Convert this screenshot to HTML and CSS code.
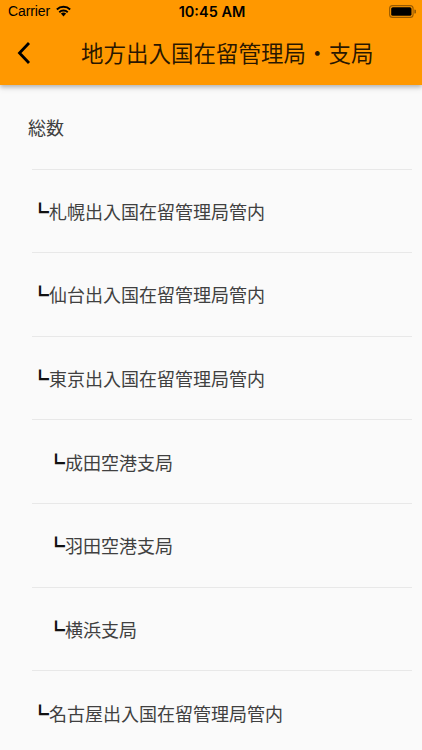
FILE: index.html
```html
<!DOCTYPE html>
<html lang="ja">
<head>
<meta charset="utf-8">
<link rel="stylesheet" href="styles.css">
</head>
<body>
<header class="appbar">
  <div class="status">
    <div class="status-left">
      <span class="carrier">Carrier</span>
      <svg class="wifi" width="17" height="12" viewBox="0 0 17 12"><path d="M8.5 11.6 L5.9 8.6 A3.8 3.8 0 0 1 11.1 8.6 Z" fill="#000"/><path d="M3.6 6.4 A7 7 0 0 1 13.4 6.4 L12.1 7.9 A5.1 5.1 0 0 0 4.9 7.9 Z" fill="#000"/><path d="M1.2 3.8 A10.4 10.4 0 0 1 15.8 3.8 L14.5 5.3 A8.5 8.5 0 0 0 2.5 5.3 Z" fill="#000"/></svg>
    </div>
    <span class="time">10:45 AM</span>
    <div class="status-right">
      <svg class="battery" width="27" height="13" viewBox="0 0 27 13"><rect x="0.6" y="0.6" width="23.5" height="11.8" rx="3" fill="none" stroke="#000" stroke-opacity="0.4" stroke-width="1.1"/><rect x="2.2" y="2.2" width="20.3" height="8.6" rx="1.6" fill="#000"/><path d="M25.3 4.4 a2 2 0 0 1 0 4.2 z" fill="#000" fill-opacity="0.4"/></svg>
    </div>
  </div>
  <div class="navbar">
    <svg class="back" width="20" height="24" viewBox="0 0 20 24"><path d="M14 2 L4.5 12 L14 22" fill="none" stroke="#000" stroke-width="2.8" stroke-linecap="butt" stroke-linejoin="miter"/></svg>
    <h1 class="title">地方出入国在留管理局・支局</h1>
  </div>
</header>
<main class="list">
  <div class="row lv0">総数</div>
  <div class="divider"></div>
  <div class="row lv1"><span class="mark">┗</span>札幌出入国在留管理局管内</div>
  <div class="divider"></div>
  <div class="row lv1"><span class="mark">┗</span>仙台出入国在留管理局管内</div>
  <div class="divider"></div>
  <div class="row lv1"><span class="mark">┗</span>東京出入国在留管理局管内</div>
  <div class="divider"></div>
  <div class="row lv2"><span class="mark">┗</span>成田空港支局</div>
  <div class="divider"></div>
  <div class="row lv2"><span class="mark">┗</span>羽田空港支局</div>
  <div class="divider"></div>
  <div class="row lv2"><span class="mark">┗</span>横浜支局</div>
  <div class="divider"></div>
  <div class="row lv1"><span class="mark">┗</span>名古屋出入国在留管理局管内</div>
  <div class="divider"></div>
</main>
</body>
</html>
```

FILE: styles.css
```css
html, body {
  margin: 0;
  padding: 0;
}
body {
  width: 422px;
  height: 750px;
  overflow: hidden;
  background: #fafafa;
  font-family: "Noto Sans CJK JP", "Noto Sans", sans-serif;
}
.appbar {
  background: #ff9800;
  box-shadow: 0 2px 4px rgba(0,0,0,0.22), 0 4px 6px rgba(0,0,0,0.08);
  position: relative;
  z-index: 2;
}
.status {
  height: 22px;
  display: grid;
  grid-template-columns: 1fr auto 1fr;
  align-items: center;
  padding: 0 8px;
}
.status-left {
  display: flex;
  align-items: center;
  gap: 5px;
}
.carrier {
  font-family: "Liberation Sans", "Inter", sans-serif;
  font-size: 14px;
  color: #000;
  letter-spacing: -0.1px;
}
.wifi {
  display: block;
  margin-top: -1px;
}
.time {
  font-family: "Inter", "Liberation Sans", sans-serif;
  font-weight: 600;
  font-size: 14.5px;
  color: #000;
  padding-left: 2px;
}
.status-right {
  display: flex;
  justify-content: flex-end;
}
.battery {
  display: block;
  margin-right: -2px;
}
.navbar {
  height: 63px;
  display: flex;
  align-items: center;
  padding-left: 15px;
}
.back {
  display: block;
  margin-top: -1px;
}
.title {
  margin: -2px 0 0 46px;
  font-size: 22.5px;
  font-weight: 400;
  color: rgba(0,0,0,0.85);
  line-height: 1;
}
.list {
  display: flex;
  flex-direction: column;
}
.row {
  height: 82.67px;
  display: flex;
  align-items: center;
  font-size: 18px;
  color: #404040;
}
.row.lv0 {
  height: 83.5px;
  padding-left: 28px;
}
.row.lv1 {
  padding-left: 31px;
}
.row.lv2 {
  padding-left: 47px;
}
.mark {
  color: #111;
  font-weight: 700;
}
.divider {
  height: 1px;
  background: #e8e8e8;
  margin: 0 10px 0 32px;
}
```
